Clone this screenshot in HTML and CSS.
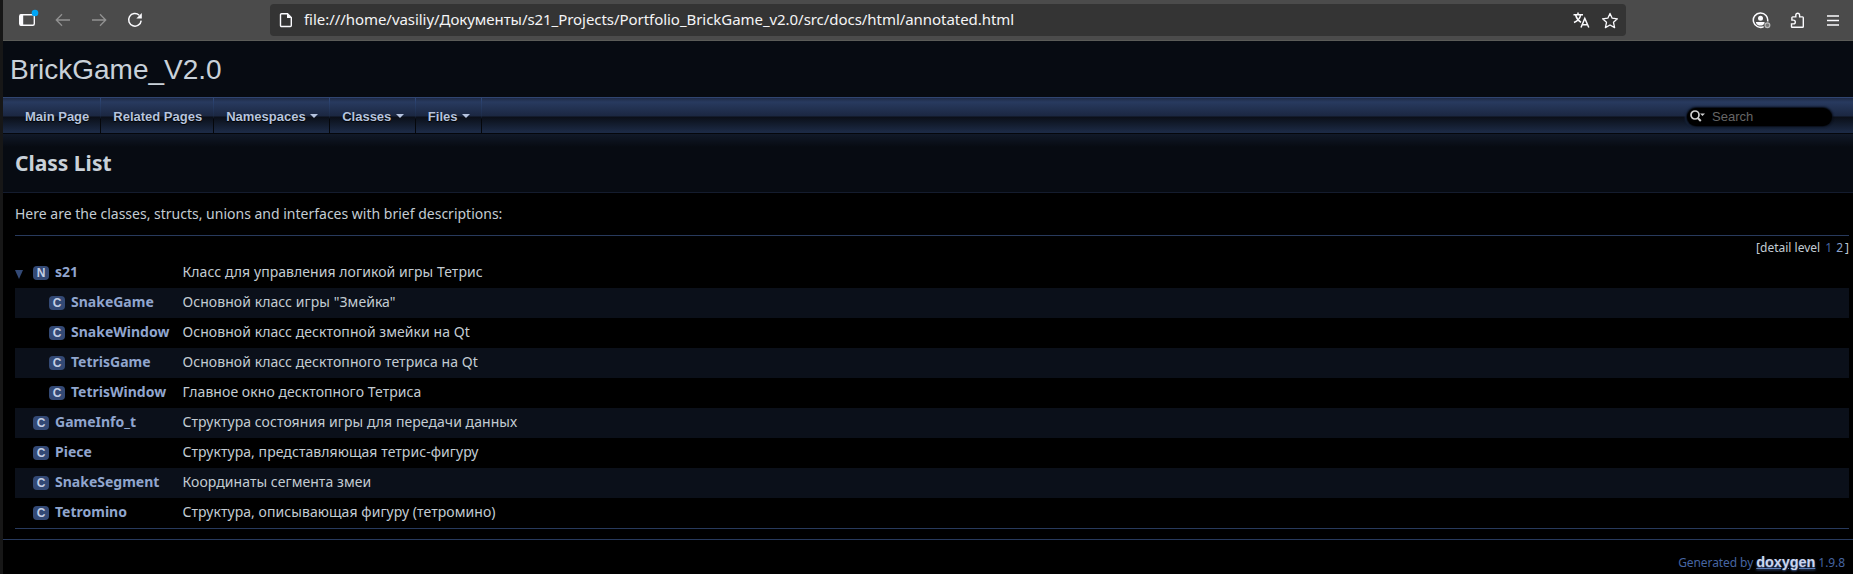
FILE: index.html
```html
<!DOCTYPE html>
<html lang="en">
<head>
<meta charset="utf-8">
<title>BrickGame_V2.0: Class List</title>
<link rel="stylesheet" href="styles.css">
</head>
<body>
<div class="window">
<header class="toolbar">
  <div class="controls">
    <svg class="side" width="22" height="20" viewBox="0 0 22 20"><rect x="1.7" y="5.7" width="14.6" height="10.6" rx="1.5" fill="none" stroke="#fbfbfe" stroke-width="1.4"/><path d="M2 5.500h3.200v11H2z" fill="#fbfbfe"/><circle cx="17" cy="4" r="3.300" fill="#00a5f5"/></svg>
    <svg class="back" width="16" height="14" viewBox="0 0 16 14"><path d="M15 7H1.500M7 1.300L1.300 7 7 12.700" fill="none" stroke="#929292" stroke-width="1.300"/></svg>
    <svg class="forward" width="16" height="14" viewBox="0 0 16 14"><path d="M1 7h13.500M9 1.300L14.700 7 9 12.700" fill="none" stroke="#929292" stroke-width="1.300"/></svg>
    <svg class="reload" width="16" height="16" viewBox="0 0 16 16"><path d="M12.200 3.200A6.300 6.300 0 1 0 14.200 8.600" fill="none" stroke="#fbfbfe" stroke-width="1.500"/><path d="M14.800 1v5.500H9.300z" fill="#fbfbfe"/></svg>
  </div>
  <div class="address">
    <svg width="14" height="16" viewBox="0 0 14 16"><path d="M2.500 1.700h6l3.800 3.800v8a1 1 0 0 1-1 1H2.500a1 1 0 0 1-1-1V2.700a1 1 0 0 1 1-1z" fill="none" stroke="#fbfbfe" stroke-width="1.400"/><path d="M8 1.500L12.500 6H8z" fill="#fbfbfe"/></svg>
    <span class="url">file:///home/vasiliy/Документы/s21_Projects/Portfolio_BrickGame_v2.0/src/docs/html/annotated.html</span>
    <svg class="translate" width="17" height="17" viewBox="0 0 17 17"><path d="M.5 2.700h9.500M5 .5v2.200M1 10.500C4.500 9 7 6.500 7.700 2.900M2.700 3.200C3.500 6.200 5.500 8.700 8 10.300M8 15.500l3.800-9 4 9M9.300 12.700h5" fill="none" stroke="#fbfbfe" stroke-width="1.500"/></svg>
    <svg class="star" width="18" height="17" viewBox="0 0 18 17"><path d="M9 1.400l2.200 4.800 5.200.6-3.900 3.500 1.100 5.300L9 13l-4.600 2.600 1.100-5.300-3.900-3.500 5.200-.6z" fill="none" stroke="#fbfbfe" stroke-width="1.300" stroke-linejoin="round"/></svg>
  </div>
  <div class="actions">
    <svg width="19" height="17" viewBox="0 0 19 17"><path d="M11.700 14.600A7.200 7.200 0 1 1 15.600 9.500" fill="none" stroke="#fbfbfe" stroke-width="1.500"/><circle cx="8.500" cy="6.200" r="2.500" fill="#fbfbfe"/><path d="M4 10h8.500v1.200c-1.200 2-2.500 2.300-4.200 2.300S5 13 4 11z" fill="#fbfbfe"/><circle cx="15.400" cy="13.200" r="2.400" fill="#777" stroke="#bbb" stroke-width="1.200"/></svg>
    <svg class="puzzle" width="15" height="17" viewBox="0 0 15 17"><path d="M2 15.300h10.500a.8.8 0 0 0 .8-.8V5.700a.8.800 0 0 0-.8-.8H9.600V3.200a1.900 1.900 0 0 0-3.800 0v1.700H2.700a.8.800 0 0 0-.8.800v2.400h1.500a1.900 1.900 0 0 1 0 3.800H1.500v2.600a.8.800 0 0 0 .5.800z" fill="none" stroke="#fbfbfe" stroke-width="1.400"/></svg>
    <svg class="menu" width="12" height="11" viewBox="0 0 12 11"><path d="M0 1h12M0 5.500h12M0 10h12" stroke="#fbfbfe" stroke-width="1.300"/></svg>
  </div>
</header>
<div class="project">BrickGame_V2.0</div>
<nav class="tabs">
  <a class="tab">Main Page</a><a class="tab">Related Pages</a><a class="tab drop">Namespaces</a><a class="tab drop">Classes</a><a class="tab drop">Files</a>
  <div class="search"><svg width="17" height="13" viewBox="0 0 17 13"><circle cx="6" cy="5" r="4" fill="none" stroke="#d0d0d0" stroke-width="1.700"/><path d="M8.800 8l3 3" stroke="#d0d0d0" stroke-width="2"/><path d="M11 3.500h5L13.500 6z" fill="#d0d0d0"/></svg><span>Search</span></div>
</nav>
<div class="heading">Class List</div>
<main class="contents">
  <p class="intro">Here are the classes, structs, unions and interfaces with brief descriptions:</p>
  <div class="directory">
    <div class="levels">[detail level <span class="lv one">1</span><span class="lv">2</span>]</div>
    <div class="row"><div class="entry"><svg class="arrow" width="8" height="9" viewBox="0 0 8 9"><path d="M0 0h8L4 9z" fill="#334975"/></svg><span class="icon">N</span><b>s21</b></div><div class="desc">Класс для управления логикой игры Тетрис</div></div>
    <div class="row even"><div class="entry child"><span class="icon">C</span><b>SnakeGame</b></div><div class="desc">Основной класс игры "Змейка"</div></div>
    <div class="row"><div class="entry child"><span class="icon">C</span><b>SnakeWindow</b></div><div class="desc">Основной класс десктопной змейки на Qt</div></div>
    <div class="row even"><div class="entry child"><span class="icon">C</span><b>TetrisGame</b></div><div class="desc">Основной класс десктопного тетриса на Qt</div></div>
    <div class="row"><div class="entry child"><span class="icon">C</span><b>TetrisWindow</b></div><div class="desc">Главное окно десктопного Тетриса</div></div>
    <div class="row even"><div class="entry"><span class="icon">C</span><b>GameInfo_t</b></div><div class="desc">Структура состояния игры для передачи данных</div></div>
    <div class="row"><div class="entry"><span class="icon">C</span><b>Piece</b></div><div class="desc">Структура, представляющая тетрис-фигуру</div></div>
    <div class="row even"><div class="entry"><span class="icon">C</span><b>SnakeSegment</b></div><div class="desc">Координаты сегмента змеи</div></div>
    <div class="row"><div class="entry"><span class="icon">C</span><b>Tetromino</b></div><div class="desc">Структура, описывающая фигуру (тетромино)</div></div>
  </div>
</main>
<footer class="footer">Generated by <span class="logo">doxygen</span> 1.9.8</footer>
</div>
</body>
</html>
```
FILE: styles.css
```css
* { box-sizing: border-box; }
body { margin: 0; height: 574px; overflow: hidden; background: #000; color: #c3ccd3; font: 14px/22px "Noto Sans", sans-serif; }
svg { flex: none; display: block; }
.window { height: 574px; border-left: 3px solid #171717; display: flex; flex-direction: column; overflow: hidden; }
.toolbar { height: 41px; flex: none; background: #4b4b4b; border-bottom: 1px solid #5b5c58; display: flex; align-items: flex-start; padding-top: 4px; }
.controls { width: 267px; height: 32px; display: flex; align-items: center; padding-left: 15px; }
.side { margin-top: -2px; }
.back { margin-left: 15px; }
.forward { margin-left: 20px; }
.reload { margin-left: 20px; }
.address { width: 1356px; height: 32px; border-radius: 4px; background: #343434; display: flex; align-items: center; padding: 0 7px 0 9px; }
.url { margin-left: 11px; padding-bottom: 2px; flex: 1; color: #f4f4f6; font-size: 15px; letter-spacing: -.05px; white-space: nowrap; }
.translate { margin-right: 11px; }
.actions { display: flex; height: 32px; align-items: center; margin-left: 126px; }
.puzzle { margin-left: 19px; }
.menu { margin-left: 22px; }
.project { height: 56px; flex: none; background: #070b12; padding-left: 7px; font: 28px/57px "Liberation Sans", Arial, sans-serif; color: #c9d1d9; }
.tabs { height: 37px; flex: none; border-top: 1px solid #304571; background: linear-gradient(#1e2b47 0, #283a5f 4px, #1b2741 18px, #0b0f18 19px, #101827 24px, #1c2a45 34px, #1c2a45 35px, #05070c 35px); display: flex; padding-left: 10px; }
.tab { height: 35px; padding: 0 11px 0 12px; border-right: 1px solid; border-image: linear-gradient(#304a7c, #1d2c49 50%, #05070b 60%, #05070b) 1; font: bold 13px/37px "Liberation Sans", Arial, sans-serif; color: #b6c4df; text-shadow: 0 1px 1px #000; white-space: nowrap; }
.drop::after { content: ""; display: inline-block; margin-left: 4.500px; vertical-align: 3px; border: 4px solid transparent; border-top-color: #b6c4df; border-bottom: 0; }
.search { width: 145px; height: 18px; margin: 10px 21px 0 auto; border-radius: 9px; background: #000; box-shadow: 0 0 2px 1px #05080e, -1px 0 2px 1px #1f3050; display: flex; align-items: center; color: #666; font: 13px/18px "Liberation Sans", Arial, sans-serif; }
.search svg { margin-left: 2px; margin-top: -2px; }
.search span { margin-left: 6px; }
.heading { height: 59px; flex: none; border-bottom: 1px solid #141c2e; background: linear-gradient(#111928, #070b12 13px); padding-left: 12px; font-size: 21px; font-weight: bold; line-height: 59px; color: #c9d1d9; }
.contents { padding: 10px 4px 0 12px; flex: none; }
.intro { margin: 0 0 11px; height: 21px; }
.directory { border-top: 1px solid #283a5d; border-bottom: 1px solid #283a5d; height: 294px; }
.levels { height: 22px; text-align: right; font-size: 12px; line-height: 24px; white-space: pre; }
.lv { color: #90a5ce; margin: 0 2px; }
.lv.one { color: #4665a2; margin-right: 2px; }
.row { height: 30px; display: flex; line-height: 28px; }
.even { background: #0b101a; }
.entry { width: 167px; display: flex; padding-left: 18px; flex: none; }
.entry.child { padding-left: 34px; }
.entry b { color: #90a5ce; }
.desc { padding-left: .5px; letter-spacing: .06px; }
.arrow { margin: 12px 10px 0 -18px; }
.icon { width: 16px; height: 14px; margin: 8px 6px 0 0; border-radius: 4px; background: #334975; color: #c4cfe5; text-align: center; font: bold 12px/14px "Liberation Sans", Arial, sans-serif; }
.footer { margin-top: 10px; border-top: 1px solid #283a5d; flex: none; height: 35px; padding: 11px 8px 0 0; text-align: right; font-size: 12px; letter-spacing: -.08px; color: #4665a2; }
.logo { font: bold 14.500px/22px "Liberation Sans", Arial, sans-serif; color: #cbd6ee; text-decoration: underline; text-decoration-color: #5f7fba; text-shadow: 0 1px 2px #4665a2; }
```
